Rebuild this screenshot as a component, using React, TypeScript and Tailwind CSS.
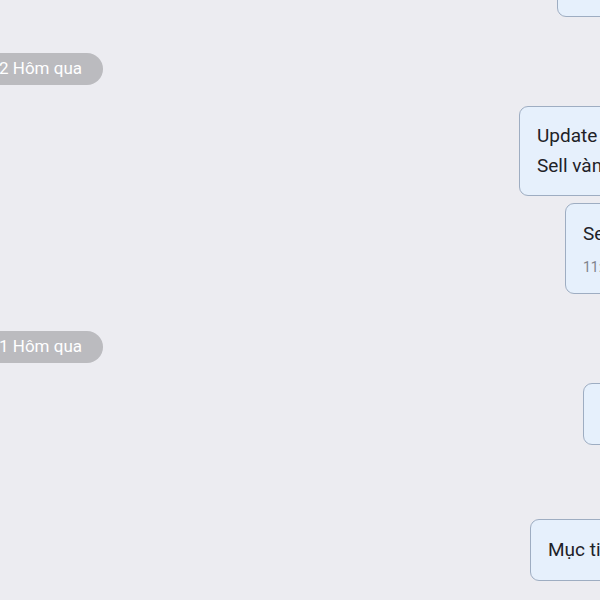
import React from "react";

const bubble =
  "rounded-[9px] border border-[#9eadc2] bg-[#e6f0fc] px-[17px] text-[19px] leading-[30px] text-[#1e2228] whitespace-nowrap w-max";

function Pill({ text }: { text: string }) {
  return (
    <div className="flex">
      <div className="h-8 rounded-r-full bg-[#bbbbbf] pl-0 pr-[21px] flex items-center text-[17px] text-white whitespace-nowrap -ml-[1px]">
        {text}
      </div>
    </div>
  );
}

export default function App() {
  return (
    <div
      className="w-[600px] h-[600px] overflow-hidden bg-[#ececf1] flex flex-col"
      style={{ fontFamily: "Roboto, 'Noto Sans', sans-serif" }}
    >
      <div className={`${bubble} py-[15px] ml-[557px] -mt-[45px] h-[62px]`}>Chốt lời</div>
      <div className="mt-[36px]">
        <Pill text="2 Hôm qua" />
      </div>
      <div className={`${bubble} ml-[519px] mt-[21px] py-[14px]`}>
        <div>Update</div>
        <div>Sell vàng</div>
      </div>
      <div className={`${bubble} ml-[565px] mt-[7px] pt-[15px] pb-[17px]`}>
        <div>Sell</div>
        <div className="mt-[9px] text-[14px] leading-[18px] text-[#7f848c]">11:32</div>
      </div>
      <div className="mt-[37px]">
        <Pill text="1 Hôm qua" />
      </div>
      <div className={`${bubble} py-[15px] ml-[583px] mt-[20px]`}>Buy</div>
      <div className={`${bubble} py-[15px] ml-[530px] mt-[74px]`}>Mục tiêu</div>
    </div>
  );
}
